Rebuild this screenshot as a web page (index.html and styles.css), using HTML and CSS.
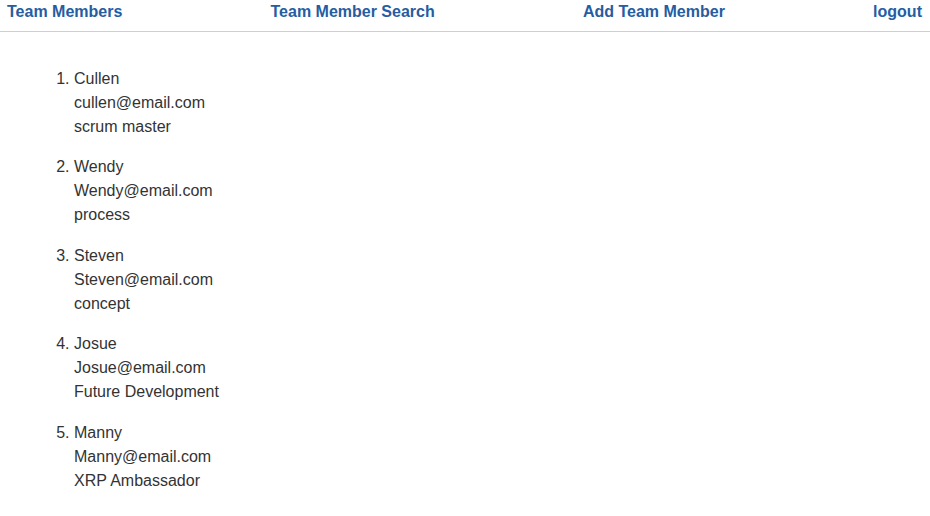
FILE: index.html
```html
<!DOCTYPE html>
<html>
<head>
<meta charset="utf-8">
<link rel="stylesheet" href="styles.css">
</head>
<body>
<nav class="nav">
  <a class="nav-link" href="#">Team Members</a>
  <a class="nav-link" href="#">Team Member Search</a>
  <a class="nav-link" href="#">Add Team Member</a>
  <a class="nav-link" href="#">logout</a>
</nav>
<ol class="members">
  <li class="member"><div>Cullen</div><div>cullen@email.com</div><div>scrum master</div></li>
  <li class="member"><div>Wendy</div><div>Wendy@email.com</div><div>process</div></li>
  <li class="member"><div>Steven</div><div>Steven@email.com</div><div>concept</div></li>
  <li class="member"><div>Josue</div><div>Josue@email.com</div><div>Future Development</div></li>
  <li class="member"><div>Manny</div><div>Manny@email.com</div><div>XRP Ambassador</div></li>
</ol>
</body>
</html>
```
FILE: styles.css
```css
html, body {
  margin: 0;
  padding: 0;
  background: #fff;
}
body {
  font-family: "Liberation Sans", Arial, sans-serif;
  font-size: 16px;
  color: #333;
}
.nav {
  display: flex;
  justify-content: space-between;
  padding: 3px 8px 10px 7px;
  line-height: 18px;
  border-bottom: 1px solid #cfcfcf;
}
.nav-link {
  color: #265da2;
  font-weight: bold;
  text-decoration: none;
}
.members {
  margin: 34.5px 0 0 0;
  padding-left: 74px;
  line-height: 24px;
}
.member {
  margin-bottom: 16.5px;
}
```
